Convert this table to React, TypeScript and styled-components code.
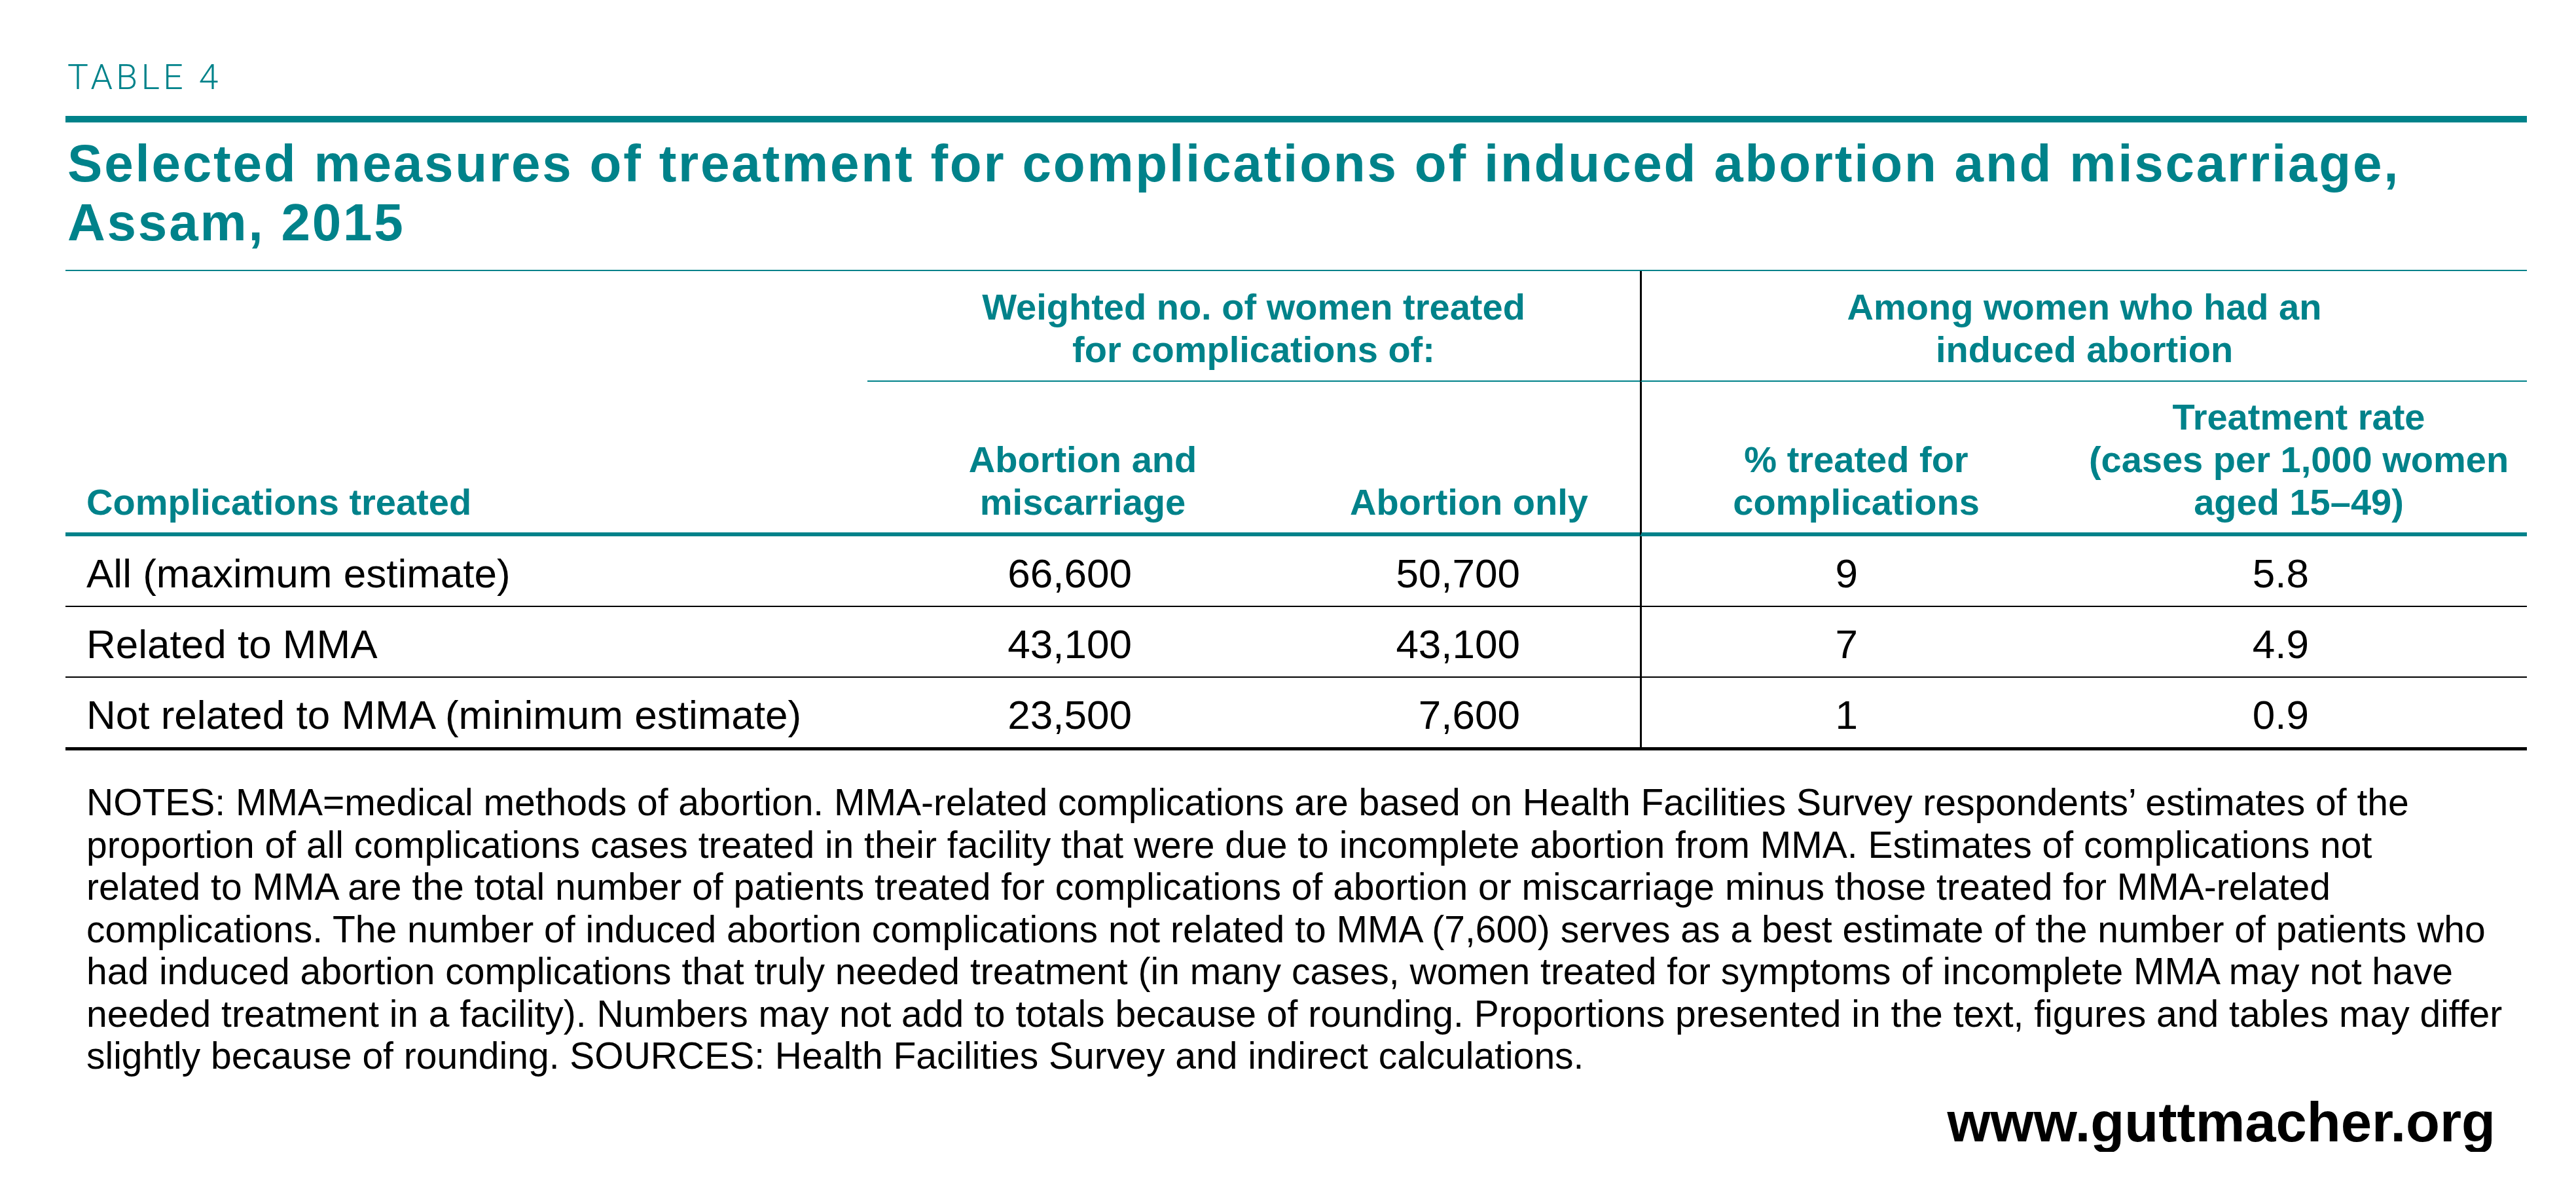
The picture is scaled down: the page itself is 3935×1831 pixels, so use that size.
import React from "react";
import styled, { createGlobalStyle, css } from "styled-components";

const TEAL = "#00828a";

const GlobalStyle = createGlobalStyle`
  html, body {
    margin: 0;
    padding: 0;
    background: #ffffff;
  }
  body {
    font-family: "Liberation Sans", Arial, sans-serif;
    color: #000000;
  }
  * { box-sizing: border-box; }
`;

const Page = styled.div`
  width: 3935px;
  padding: 88px 75px 0 100px;
`;

const Label = styled.div`
  font-family: Roboto, "Liberation Sans", sans-serif;
  font-weight: 300;
  font-size: 53.5px;
  line-height: 60px;
  letter-spacing: 5.5px;
  color: ${TEAL};
  padding-left: 3px;
`;

const ThickRule = styled.div`
  height: 10px;
  margin-top: 29px;
  background: ${TEAL};
`;

const Title = styled.h1`
  margin: 18px 0 0 0;
  padding-left: 3px;
  font-family: "Liberation Sans", Arial, sans-serif;
  font-weight: 700;
  font-size: 80px;
  line-height: 90px;
  letter-spacing: 2.8px;
  color: ${TEAL};
  white-space: nowrap;
`;

const Table = styled.table`
  margin-top: 27px;
  width: 3760px;
  table-layout: fixed;
  border-collapse: separate;
  border-spacing: 0;
  border-top: 2px solid ${TEAL};
`;

const divider = css`
  border-left: 3px solid #000000;
`;

const GroupCell = styled.th<{ $rule?: boolean; $divider?: boolean }>`
  padding: 22px 0 15px 0;
  font-size: 56px;
  line-height: 65px;
  font-weight: 700;
  color: ${TEAL};
  text-align: center;
  vertical-align: top;
  border-bottom: ${(p) => (p.$rule ? `2px solid ${TEAL}` : "none")};
  ${(p) => p.$divider && divider}
`;

const HeadCell = styled.th<{ $left?: boolean; $divider?: boolean }>`
  padding: 21px 0 14px ${(p) => (p.$left ? "32px" : "0")};
  font-size: 56px;
  line-height: 65px;
  font-weight: 700;
  color: ${TEAL};
  text-align: ${(p) => (p.$left ? "left" : "center")};
  vertical-align: bottom;
  border-bottom: 6px solid ${TEAL};
  ${(p) => p.$divider && divider}
`;

const DataCell = styled.td<{ $pr?: number; $divider?: boolean; $last?: boolean }>`
  padding: 22px ${(p) => (p.$pr !== undefined ? `${p.$pr}px` : "0")} 14px
    ${(p) => (p.$pr !== undefined ? "0" : "32px")};
  font-size: 62px;
  line-height: 70px;
  font-weight: 400;
  color: #000000;
  text-align: ${(p) => (p.$pr !== undefined ? "right" : "left")};
  white-space: nowrap;
  border-bottom: ${(p) => (p.$last ? "5px" : "2px")} solid #000000;
  ${(p) => p.$divider && divider}
`;

const Notes = styled.div`
  margin-top: 47px;
  padding-left: 32px;
  font-size: 57px;
  line-height: 64.5px;
  color: #000000;
`;

const NoteLine = styled.span`
  display: block;
  white-space: nowrap;
`;

const Footer = styled.div`
  margin-top: 24px;
  padding-right: 48px;
  text-align: right;
  font-size: 85px;
  line-height: 90px;
  font-weight: 700;
  color: #000000;
`;

type Row = { label: string; values: string[] };

const rows: Row[] = [
  { label: "All (maximum estimate)", values: ["66,600", "50,700", "9", "5.8"] },
  { label: "Related to MMA", values: ["43,100", "43,100", "7", "4.9"] },
  {
    label: "Not related to MMA (minimum estimate)",
    values: ["23,500", "7,600", "1", "0.9"],
  },
];

const rightPads = [254, 183, 325, 333];

const noteLines = [
  "NOTES: MMA=medical methods of abortion. MMA-related complications are based on Health Facilities Survey respondents’ estimates of the",
  "proportion of all complications cases treated in their facility that were due to incomplete abortion from MMA. Estimates of complications not",
  "related to MMA are the total number of patients treated for complications of abortion or miscarriage minus those treated for MMA-related",
  "complications. The number of induced abortion complications not related to MMA (7,600) serves as a best estimate of the number of patients who",
  "had induced abortion complications that truly needed treatment (in many cases, women treated for symptoms of incomplete MMA may not have",
  "needed treatment in a facility). Numbers may not add to totals because of rounding. Proportions presented in the text, figures and tables may differ",
  "slightly because of rounding. SOURCES: Health Facilities Survey and indirect calculations.",
];

export default function App() {
  return (
    <>
      <GlobalStyle />
      <Page>
        <Label>TABLE 4</Label>
        <ThickRule />
        <Title>
          Selected measures of treatment for complications of induced abortion and miscarriage,
          <br />
          Assam, 2015
        </Title>
        <Table>
          <colgroup>
            <col style={{ width: 1225 }} />
            <col style={{ width: 658 }} />
            <col style={{ width: 522 }} />
            <col style={{ width: 658 }} />
            <col style={{ width: 697 }} />
          </colgroup>
          <thead>
            <tr>
              <GroupCell />
              <GroupCell colSpan={2} $rule>
                Weighted no. of women treated
                <br />
                for complications of:
              </GroupCell>
              <GroupCell colSpan={2} $rule $divider>
                Among women who had an
                <br />
                induced abortion
              </GroupCell>
            </tr>
            <tr>
              <HeadCell $left>Complications treated</HeadCell>
              <HeadCell>
                Abortion and
                <br />
                miscarriage
              </HeadCell>
              <HeadCell>Abortion only</HeadCell>
              <HeadCell $divider>
                % treated for
                <br />
                complications
              </HeadCell>
              <HeadCell>
                Treatment rate
                <br />
                (cases per 1,000 women
                <br />
                aged 15–49)
              </HeadCell>
            </tr>
          </thead>
          <tbody>
            {rows.map((r, i) => {
              const last = i === rows.length - 1;
              return (
                <tr key={r.label}>
                  <DataCell $last={last}>{r.label}</DataCell>
                  {r.values.map((v, j) => (
                    <DataCell key={j} $pr={rightPads[j]} $divider={j === 2} $last={last}>
                      {v}
                    </DataCell>
                  ))}
                </tr>
              );
            })}
          </tbody>
        </Table>
        <Notes>
          {noteLines.map((l) => (
            <NoteLine key={l}>{l}</NoteLine>
          ))}
        </Notes>
        <Footer>www.guttmacher.org</Footer>
      </Page>
    </>
  );
}
